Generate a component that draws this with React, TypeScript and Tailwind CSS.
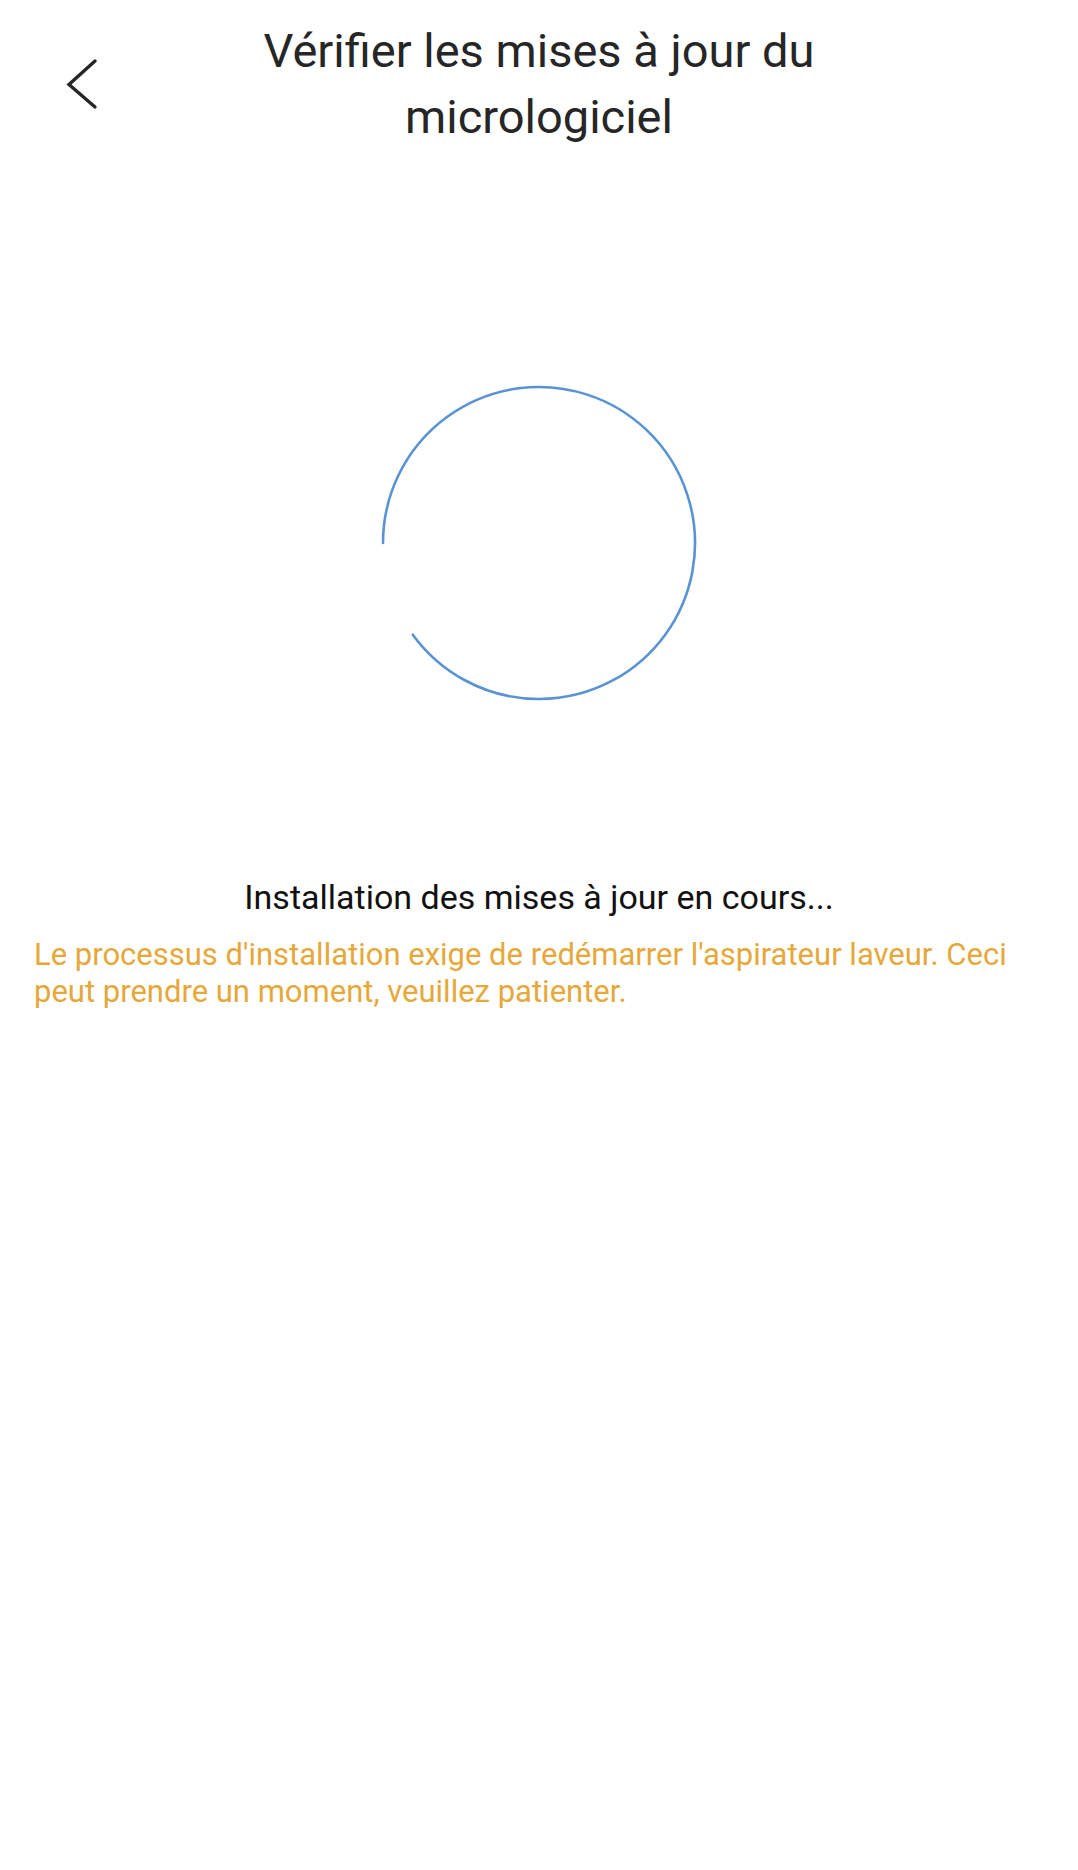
import React from 'react';

function BackChevron() {
  return (
    <svg width="34" height="52" viewBox="0 0 34 52" fill="none">
      <polyline
        points="29,3 3,26.5 29,49"
        stroke="#262626"
        strokeWidth="3.4"
        strokeLinecap="round"
        strokeLinejoin="miter"
      />
    </svg>
  );
}

// open ring spinner, gap on the lower left
function Spinner() {
  return (
    <svg width="320" height="320" viewBox="0 0 320 320" fill="none">
      <path
        d="M 4 160 A 156 156 0 1 1 33.8 251.7"
        stroke="#5a93d3"
        strokeWidth="2.6"
        strokeLinecap="round"
      />
    </svg>
  );
}

export default function App() {
  return (
    <div
      className="min-h-[1870px] w-full bg-white"
      style={{ fontFamily: 'Roboto, "Noto Sans", sans-serif' }}
    >
      <header className="grid grid-cols-[150px_1fr_150px] items-center pt-[18px]">
        <button className="flex items-center pl-[66px]">
          <BackChevron />
        </button>
        <h1 className="text-center text-[47px] leading-[66px] font-normal text-[#262626]">
          Vérifier les mises à jour du micrologiciel
        </h1>
        <div />
      </header>

      <div className="mt-[233px] flex justify-center">
        <Spinner />
      </div>

      <p className="mt-[174px] text-center text-[34px] leading-[40px] text-[#111111]">
        Installation des mises à jour en cours...
      </p>
      <p className="mt-[19px] px-[34px] text-[31px] leading-[37px] text-[#e6a83a]">
        Le processus d'installation exige de redémarrer l'aspirateur laveur. Ceci peut prendre un moment, veuillez patienter.
      </p>
    </div>
  );
}
